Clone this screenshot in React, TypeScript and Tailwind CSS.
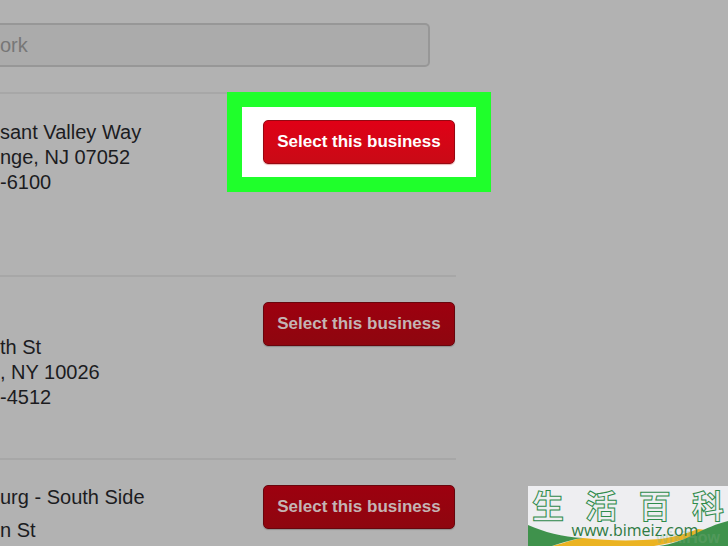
import React from 'react';

interface Business {
  id: string;
  name: string;
  address: string[];
  highlighted?: boolean;
}

const businesses: Business[] = [
  { id: 'nj', name: '', address: ['sant Valley Way', 'nge, NJ 07052', '-6100'], highlighted: true },
  { id: 'ny', name: '', address: ['th St', ', NY 10026', '-4512'] },
  { id: 'south-side', name: 'urg - South Side', address: ['n St'] },
];

const SelectButton: React.FC<{ highlighted?: boolean }> = ({ highlighted }) => (
  <div className="relative mr-px shrink-0">
    {highlighted && (
      <div className="absolute -inset-x-9 -inset-y-7 border-[15px] border-[#1fff2b] bg-white" />
    )}
    <button
      type="button"
      className={`relative h-11 w-48 rounded-[5px] border text-[17px] font-bold whitespace-nowrap ${
        highlighted
          ? 'border-[#960812] bg-linear-to-b from-[#e00016] to-[#c90a16] text-white shadow-[0_1px_1px_#e8b4b4]'
          : 'border-[#68060d] bg-linear-to-b from-[#9d000f] to-[#8e060f] text-[#c4b4b4] shadow-[0_1px_1px_#8d8d8d]'
      }`}
    >
      Select this business
    </button>
  </div>
);

const BusinessRow: React.FC<{ business: Business }> = ({ business }) => (
  <li
    className={`flex h-[183px] items-start justify-between border-t-2 border-[#a7a7a7] ${
      business.highlighted ? 'pt-[26px]' : 'pt-[25px]'
    }`}
  >
    <div className="text-xl leading-[25px] whitespace-nowrap text-[#1c1c1f]">
      {!business.highlighted && <h2 className="mb-2 h-[25px]">{business.name}</h2>}
      <address className="not-italic">
        {business.address.map((line) => (
          <p key={line}>{line}</p>
        ))}
      </address>
    </div>
    <SelectButton highlighted={business.highlighted} />
  </li>
);

const SiteBadge: React.FC = () => (
  <a href="#" className="absolute right-0 bottom-0 block h-[60px] w-[200px] bg-[#eeeef1]">
    <svg viewBox="0 0 200 60" className="absolute inset-0 h-full w-full" aria-hidden="true">
      <path d="M24 60 C36 57 46 53 55 52 C80 55 108 55 132 53 C146 51 157 48 170 43 L178 44 L165 60 Z" fill="#ebb322" />
      <path d="M0 39 C16 46 34 51 55 52 C46 53 36 56 24 60 L0 60 Z" fill="#3f924c" />
      <path d="M126 60 C152 56 176 48 200 34 L200 60 Z" fill="#eeeef1" />
      <path d="M131 60 C144 58 155 54 167 48 C179 42 188 38 200 35 L200 60 Z" fill="#3f924c" />
    </svg>
    <span className="absolute right-2 bottom-0 text-base leading-4 font-bold text-[#7fae84]/30">wikiHow</span>
    <span className="relative flex justify-between px-1 font-['Noto_Sans_CJK_SC',sans-serif] text-[32px] leading-9 font-bold text-[#eeeef1] [-webkit-text-stroke:1px_#2e8b4b]">
      <span>生</span>
      <span>活</span>
      <span>百</span>
      <span>科</span>
    </span>
    <span className="relative block pl-3.5 text-center font-['Open_Sans',sans-serif] text-base leading-4 font-medium text-[#2f7a43]">
      www.bimeiz.com
    </span>
  </a>
);

const App: React.FC = () => {
  return (
    <main className="relative h-screen overflow-hidden bg-[#b2b2b2] font-['Liberation_Sans',Arial,sans-serif]">
      <div className="w-full max-w-[456px]">
        <div className="pt-[23px] pr-[26px] pb-[25px]">
          <input
            type="text"
            aria-label="Location"
            defaultValue="ork"
            className="block h-11 w-full rounded-r-[5px] border-2 border-l-0 border-[#979797] bg-[#ababab] text-xl text-[#777777] outline-none"
          />
        </div>
        <ul>
          {businesses.map((business) => (
            <BusinessRow key={business.id} business={business} />
          ))}
        </ul>
      </div>
      <SiteBadge />
    </main>
  );
};

export default App;
